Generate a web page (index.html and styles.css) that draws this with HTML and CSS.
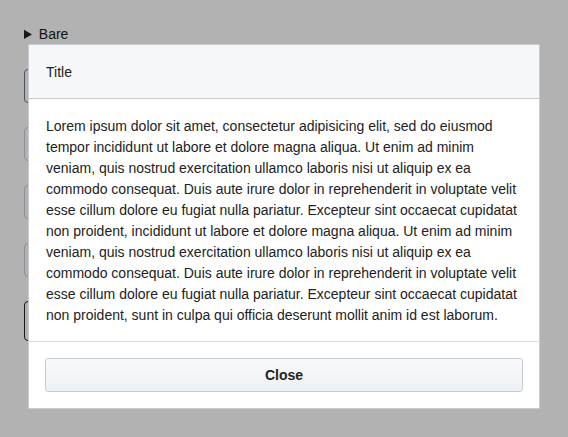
FILE: index.html
```html
<!DOCTYPE html>
<html>
<head>
<meta charset="utf-8">
<link rel="stylesheet" href="styles.css">
</head>
<body>
<div class="page">
  <details class="bare">
    <summary>Bare</summary>
  </details>
  <div class="field dark"></div>
  <div class="field"></div>
  <div class="field"></div>
  <div class="field"></div>
  <div class="field tall dark"></div>
</div>
<div class="overlay">
  <div class="modal">
    <div class="modal-header">Title</div>
    <div class="modal-body">Lorem ipsum dolor sit amet, consectetur adipisicing elit, sed do eiusmod tempor incididunt ut labore et dolore magna aliqua. Ut enim ad minim veniam, quis nostrud exercitation ullamco laboris nisi ut aliquip ex ea commodo consequat. Duis aute irure dolor in reprehenderit in voluptate velit esse cillum dolore eu fugiat nulla pariatur. Excepteur sint occaecat cupidatat non proident, incididunt ut labore et dolore magna aliqua. Ut enim ad minim veniam, quis nostrud exercitation ullamco laboris nisi ut aliquip ex ea commodo consequat. Duis aute irure dolor in reprehenderit in voluptate velit esse cillum dolore eu fugiat nulla pariatur. Excepteur sint occaecat cupidatat non proident, sunt in culpa qui officia deserunt mollit anim id est laborum.</div>
    <div class="modal-footer">
      <button class="btn">Close</button>
    </div>
  </div>
</div>
</body>
</html>
```
FILE: styles.css
```css
html, body {
  margin: 0;
  padding: 0;
  background: #fff;
  font-family: "Liberation Sans", Arial, sans-serif;
  font-size: 14px;
  color: #222;
}
.page {
  padding: 26px 0 0 24px;
  display: flex;
  flex-direction: column;
  gap: 24px;
}
.bare {
  margin-bottom: 2px;
}
.bare summary {
  line-height: 17px;
  cursor: pointer;
}
.field {
  width: 300px;
  height: 32px;
  border: 1px solid #c8ccd1;
  border-radius: 4px;
  background: #fff;
}
.field.dark {
  border-color: #72777d;
}
.field.tall {
  height: 38px;
  border-color: #202122;
}
.overlay {
  position: fixed;
  inset: 0;
  background: rgba(0, 0, 0, 0.3);
  display: flex;
  justify-content: center;
  align-items: flex-start;
  padding-top: 44px;
}
.modal {
  width: 512px;
  box-sizing: border-box;
  background: #fff;
  border: 1px solid #c8ccd1;
  border-radius: 2px;
  line-height: 21px;
}
.modal-header {
  background: #f6f7f9;
  border-bottom: 1px solid #c8ccd1;
  padding: 17px 17px 15px;
  color: #222;
}
.modal-body {
  padding: 17px 17px 15px;
  border-bottom: 1px solid #dcdee1;
}
.modal-footer {
  padding: 16px;
}
.btn {
  display: block;
  width: 100%;
  height: 34px;
  box-sizing: border-box;
  border: 1px solid #c8ccd1;
  border-radius: 3px;
  background: linear-gradient(#f8f9fa, #eef1f4);
  font-family: "Liberation Sans", Arial, sans-serif;
  font-size: 14px;
  font-weight: bold;
  color: #222;
}
```
